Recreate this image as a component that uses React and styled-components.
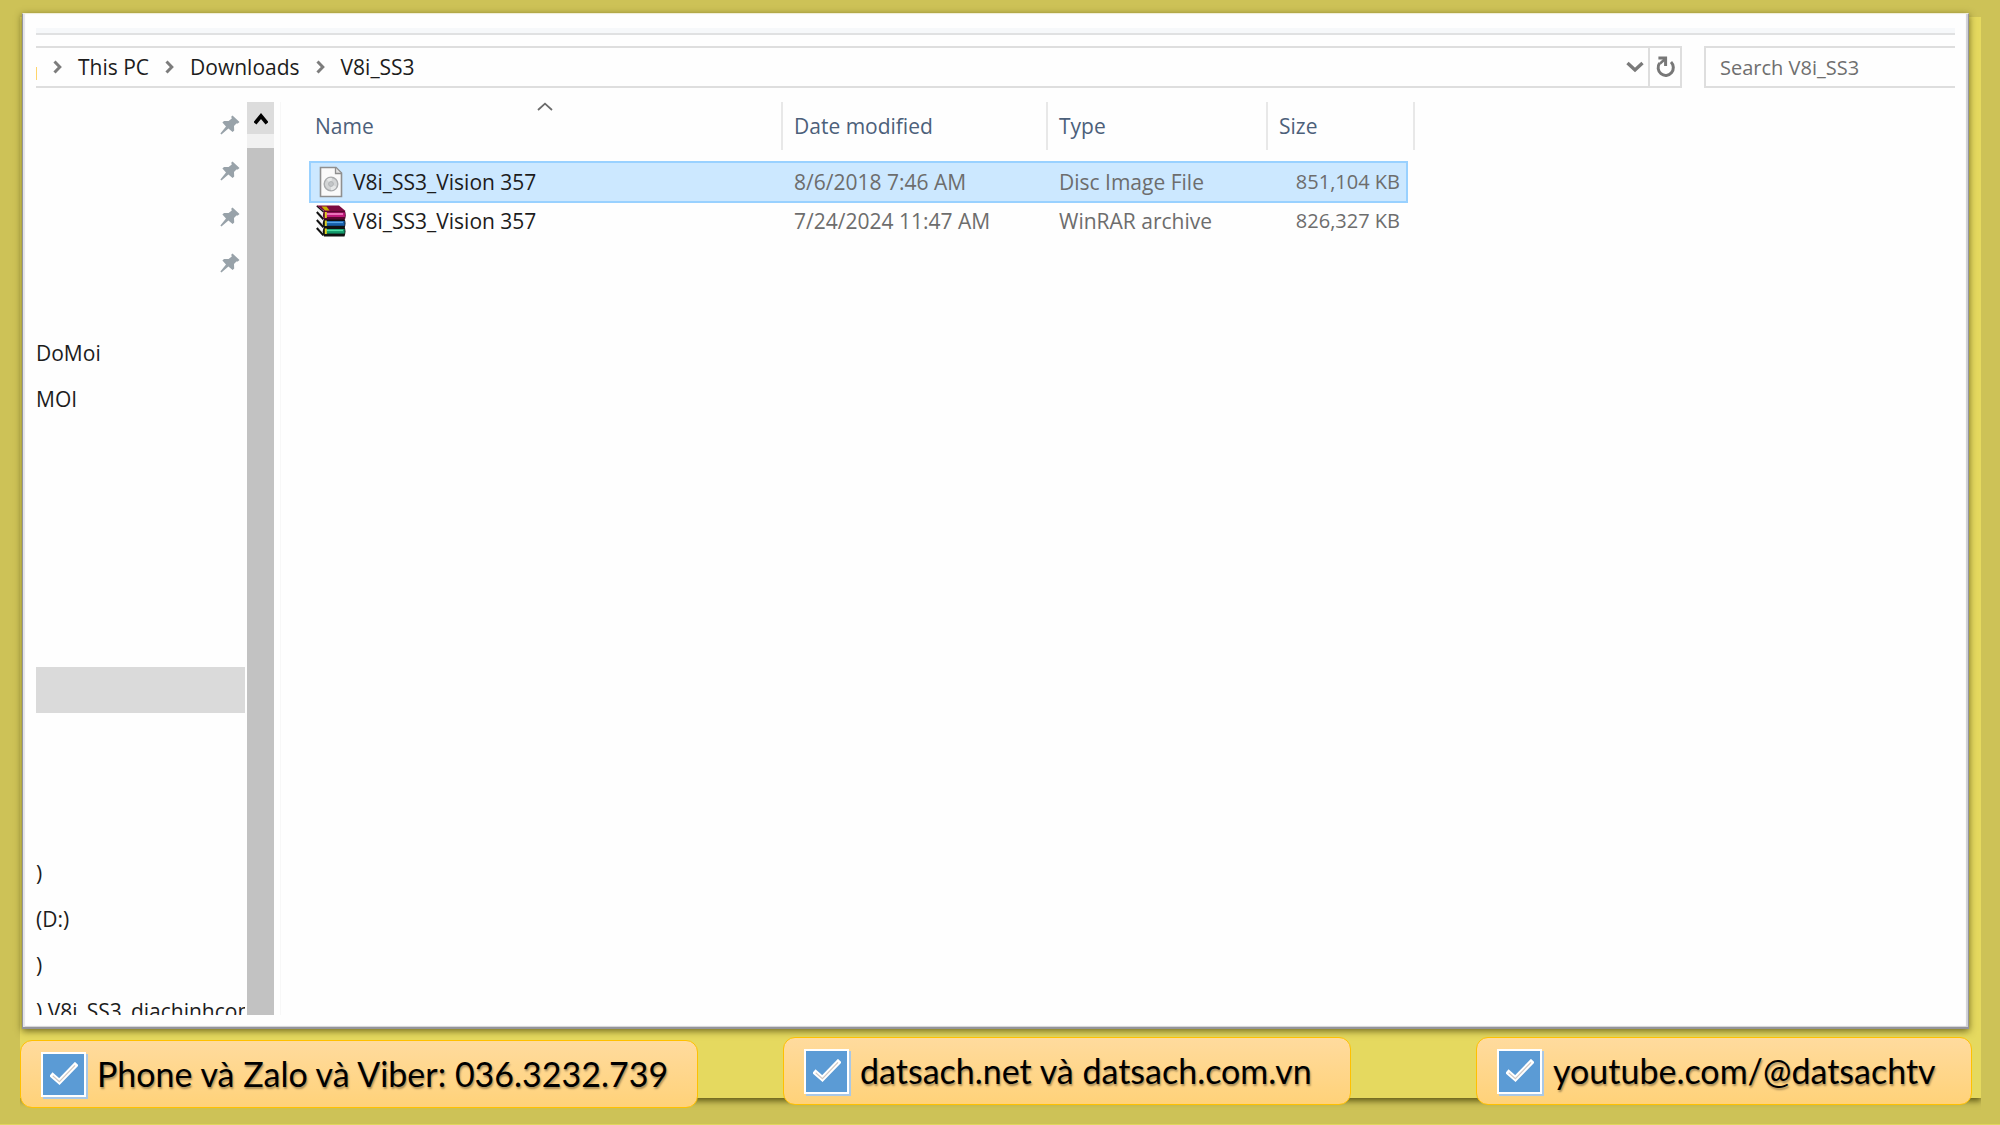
import { useState } from "react";
import styled, { createGlobalStyle } from "styled-components";

const folders = [
  { gap: 0, rows: [{ pinned: true }, { pinned: true }, { pinned: true }, { pinned: true }] },
  { gap: 44, rows: [{ name: "DoMoi" }, { name: "MOI" }] },
  { gap: 245, rows: [{ active: true }] },
  { gap: 137, rows: [{ name: ")" }, { name: "(D:)" }, { name: ")" }, { name: ") V8i_SS3_diachinhcong" }] },
];

const files = [
  { id: 1, kind: "disc", name: "V8i_SS3_Vision 357", date: "8/6/2018 7:46 AM", type: "Disc Image File", size: "851,104 KB" },
  { id: 2, kind: "rar", name: "V8i_SS3_Vision 357", date: "7/24/2024 11:47 AM", type: "WinRAR archive", size: "826,327 KB" },
];

const PinIcon = () => (
  <svg width="20" height="20" viewBox="0 0 20 20" fill="#98a2a9">
    <path d="M12.5 0.5 L19.5 7 L17.8 8.6 L16.4 8.4 L14 11 L14.2 15.4 L12.6 17 L8.4 13.4 L1.4 19.6 L0.4 18.6 L6 11.4 L2.4 7.6 L4 6 L8.6 6 L11.8 3.4 L11.2 1.8 Z" />
  </svg>
);

const ChevronRight = () => (
  <svg width="9" height="14" viewBox="0 0 9 14" fill="none" stroke="#7c7c7c" strokeWidth="3">
    <path d="M1.5 1.5 L6.8 7 L1.5 12.5" />
  </svg>
);

const ChevronDown = () => (
  <svg width="18" height="12" viewBox="0 0 18 12" fill="none" stroke="#7a7a7a" strokeWidth="3.4">
    <path d="M1.5 2 L9 9 L16.5 2" />
  </svg>
);

const RefreshIcon = () => (
  <svg width="20" height="22" viewBox="0 0 20 22" fill="none" stroke="#777" strokeWidth="3">
    <path d="M16 6 A7.6 7.8 0 1 1 4.6 7" />
    <path d="M3.4 2 H10.6 V10" strokeWidth="3" />
    <path d="M10 3 L5 7.6" strokeWidth="2.6" />
  </svg>
);

const ScrollUpIcon = () => (
  <svg width="14" height="13" viewBox="0 0 14 13" fill="none" stroke="#000" strokeWidth="3.8">
    <path d="M1 11.4 L7 4 L13 11.4" />
  </svg>
);

const SortIcon = () => (
  <svg width="16" height="9" viewBox="0 0 16 9" fill="none" stroke="#6b6b6b" strokeWidth="1.8">
    <path d="M1 8 L8 1.6 L15 8" />
  </svg>
);

const DiscFileIcon = () => (
  <svg width="30" height="32" viewBox="0 0 30 32">
    <path d="M4.5 1.5 H20 L25.5 7 V30.5 H4.5 Z" fill="#fafafa" stroke="#8f8f8f" strokeWidth="1.6" />
    <path d="M19.5 1.8 V7.5 H25.2" fill="#e3e3e3" stroke="#8f8f8f" strokeWidth="1.3" />
    <circle cx="15" cy="18" r="6.8" fill="#d3d5d6" stroke="#a9abad" strokeWidth="1.4" />
    <path d="M15 18 L10.6 13.6 A6.2 6.2 0 0 1 16 11.9 Z" fill="#e6e8e8" />
    <path d="M15 18 L20.4 20.8 A6.2 6.2 0 0 1 15 24.2 Z" fill="#e6e8e8" />
    <circle cx="15" cy="18" r="2.4" fill="#c3c6c8" stroke="#b1b4b6" />
  </svg>
);

const RarFileIcon = () => (
  <svg width="30" height="32" viewBox="0 0 30 32">
    {/* green book */}
    <path d="M2 19 L8 22 L8 30 L2 25 Z" fill="#f4f4f4" />
    <path d="M0.8 23 L7.4 30.4" stroke="#111" strokeWidth="2" />
    <path d="M8 22 H28.5 Q30.5 26 28.5 31.4 H8 Q5.5 26.5 8 22 Z" fill="#111" />
    <path d="M9 24 H28.6 V28.6 H9 Z" fill="#12986a" />
    <path d="M10.5 25.4 H27" stroke="#4fe0a8" strokeWidth="1.4" />
    {/* blue book */}
    <path d="M2 11 L8 14 L8 22 L2 17 Z" fill="#f4f4f4" />
    <path d="M0.8 15 L7.4 22.2" stroke="#111" strokeWidth="2" />
    <path d="M8 14 H28.5 Q30.5 18 28.5 23 H8 Q5.5 18.5 8 14 Z" fill="#111" />
    <path d="M9 16 H28.6 V20.8 H9 Z" fill="#175fa8" />
    <path d="M10.5 17.4 H27" stroke="#58a7e8" strokeWidth="1.4" />
    {/* magenta book on top */}
    <path d="M1 2 L8 7 L8 14 L2 9 Z" fill="#f4f4f4" />
    <path d="M0.8 7 L7.4 14.2" stroke="#111" strokeWidth="2" />
    <path d="M0.8 1 L7.6 7" stroke="#111" strokeWidth="1.4" />
    <path d="M0.5 0.5 H23 L29.5 6 H8 Z" fill="#7c0a41" />
    <path d="M8 6 H29 Q30.5 10 29 14.6 H8 Q5.8 10 8 6 Z" fill="#5a0730" />
    <path d="M9 7.5 H28.8 V12 H9 Z" fill="#c0197a" />
    <path d="M10.5 9 H27" stroke="#f48bca" strokeWidth="1.6" />
    <path d="M5.5 1.5 H10.5 L13.5 5.5 H9 Z" fill="#c9b400" />
    <path d="M9.8 7 V13 M9.8 15.6 V21 M9.8 23.6 V29" stroke="#e0d020" strokeWidth="2" />
  </svg>
);

const TickIcon = () => (
  <svg width="28" height="24" viewBox="0 0 28 24" fill="none" strokeLinecap="square">
    <path d="M2.8 13.8 L9.4 19.6 L25 3.4" stroke="#fff" strokeWidth="5" />
    <path d="M3.2 14.2 L9.4 19.6 L24.6 3.8" stroke="#cfc8c4" strokeWidth="1.2" />
  </svg>
);

const ContactCard = ({ children, ...props }) => (
  <Card {...props}>
    <TickBox>
      <input type="checkbox" defaultChecked />
      <TickIcon />
    </TickBox>
    <span>{children}</span>
  </Card>
);

export default function App() {
  const [selected, setSelected] = useState(1);
  const [query, setQuery] = useState("");

  return (
    <Page>
      <GlobalStyle />
      <Explorer>
        <Ribbon />
        <Toolbar>
          <AddressBar aria-label="Address">
            <FolderEdge />
            <ChevronRight />
            <Crumb href="#this-pc">This PC</Crumb>
            <ChevronRight />
            <Crumb href="#downloads">Downloads</Crumb>
            <ChevronRight />
            <Crumb href="#v8i">V8i_SS3</Crumb>
            <HistoryButton type="button" aria-label="Previous locations">
              <ChevronDown />
            </HistoryButton>
            <RefreshButton type="button" aria-label="Refresh">
              <RefreshIcon />
            </RefreshButton>
          </AddressBar>
          <Search
            type="text"
            aria-label="Search V8i_SS3"
            placeholder="Search V8i_SS3"
            value={query}
            onChange={(e) => setQuery(e.target.value)}
          />
        </Toolbar>
        <Content>
          <Sidebar aria-label="Folders">
            {folders.map((group, i) => (
              <FolderGroup key={i} $gap={group.gap}>
                {group.rows.map((row, j) => (
                  <FolderRow key={j} $active={row.active}>
                    <span>{row.name}</span>
                    {row.pinned && <PinIcon />}
                  </FolderRow>
                ))}
              </FolderGroup>
            ))}
          </Sidebar>
          <Scrollbar>
            <ScrollUp type="button" aria-label="Scroll up">
              <ScrollUpIcon />
            </ScrollUp>
            <ScrollThumb />
          </Scrollbar>
          <FilePane>
            <FileTable>
              <colgroup>
                <Col $width={474} />
                <Col $width={265} />
                <Col $width={220} />
                <Col $width={140} />
                <Col $width={7} />
              </colgroup>
              <thead>
                <tr>
                  <Th>
                    <HeadButton type="button">
                      Name
                      <SortMark>
                        <SortIcon />
                      </SortMark>
                    </HeadButton>
                  </Th>
                  <Th>
                    <HeadButton type="button" $inset>Date modified</HeadButton>
                  </Th>
                  <Th>
                    <HeadButton type="button" $inset>Type</HeadButton>
                  </Th>
                  <Th colSpan={2}>
                    <HeadButton type="button" $inset>Size</HeadButton>
                  </Th>
                </tr>
              </thead>
              <tbody>
                {files.map((file) => (
                  <FileRow
                    key={file.id}
                    $selected={file.id === selected}
                    onClick={() => setSelected(file.id)}
                  >
                    <td>
                      <FileName>
                        {file.kind === "disc" ? <DiscFileIcon /> : <RarFileIcon />}
                        {file.name}
                      </FileName>
                    </td>
                    <td>{file.date}</td>
                    <td>{file.type}</td>
                    <SizeCell>{file.size}</SizeCell>
                  </FileRow>
                ))}
              </tbody>
            </FileTable>
          </FilePane>
        </Content>
      </Explorer>
      <Footer>
        <ContactCard $width={678} $drop={3}>Phone và Zalo và Viber: 036.3232.739</ContactCard>
        <ContactCard $width={568} $before="85px">datsach.net và datsach.com.vn</ContactCard>
        <ContactCard $width={496} $before="auto">youtube.com/@datsachtv</ContactCard>
      </Footer>
    </Page>
  );
}

const GlobalStyle = createGlobalStyle`
  *, *::before, *::after {
    box-sizing: border-box;
  }
  body {
    margin: 0;
    background: #cdc257;
    font-family: "Open Sans", "Noto Sans", sans-serif;
    font-size: 21px;
    line-height: 28px;
    color: #1c1c1c;
  }
  button, input {
    font: inherit;
    color: inherit;
  }
  button {
    padding: 0;
    border: 0;
    background: none;
  }
  svg {
    flex: none;
    display: block;
  }
`;

const Page = styled.div`
  position: relative;
  isolation: isolate;
  display: flex;
  flex-direction: column;
  height: 100vh;
  padding: 13px 28px 16px 20px;
  border-bottom: 1px solid #e0d55e;

  /* bright sheet lying under the window and the cards */
  &::before {
    content: "";
    position: absolute;
    z-index: -1;
    inset: 17px 19px 26px 20px;
    background: #e5d95f;
    box-shadow: 0 3px 6px rgba(60, 55, 0, 0.75);
    clip-path: inset(0 0 -14px 0);
  }
`;

const Explorer = styled.main`
  flex: 1;
  min-height: 0;
  display: flex;
  flex-direction: column;
  margin: 0 3px 0 2px;
  padding: 14px 13px 12px;
  background: #fefefe;
  border: 1px solid #94949a;
  border-top-color: #f0eed8;
  border-bottom-width: 2px;
  box-shadow:
    inset 2px 0 1px #e4e4e8,
    inset -2px -1px 1px #d0d0d4,
    0 2px 7px rgba(70, 64, 10, 0.75);
`;

const Ribbon = styled.div`
  flex: none;
  height: 7px;
  background: #f6f8fa;
  border-bottom: 2px solid #e0e1e2;
`;

const Toolbar = styled.div`
  display: flex;
  gap: 22px;
  margin-top: 11px;
`;

const AddressBar = styled.nav`
  flex: 1;
  display: flex;
  align-items: center;
  gap: 16px;
  height: 42px;
  border: 2px solid #dedede;
  border-left: 0;
`;

const FolderEdge = styled.span`
  align-self: flex-end;
  width: 1px;
  height: 13px;
  margin-bottom: 6px;
  background: #ffd56b;
`;

const Crumb = styled.a`
  color: inherit;
  text-decoration: none;
`;

const HistoryButton = styled.button`
  margin-left: auto;
  margin-right: -12px;
`;

const RefreshButton = styled.button`
  display: grid;
  place-items: center;
  align-self: stretch;
  width: 32px;
  border-left: 2px solid #dedede;
`;

const Search = styled.input`
  flex: 0 1 251px;
  min-width: 0;
  height: 42px;
  padding: 0 0 0 14px;
  border: 2px solid #dedede;
  border-right: 0;
  background: transparent;
  font-size: 20px;

  &::placeholder {
    color: #6f6f6f;
    opacity: 1;
  }
`;

const Content = styled.div`
  flex: 1;
  min-height: 0;
  display: flex;
  padding-top: 14px;
`;

const Sidebar = styled.aside`
  flex: none;
  width: 209px;
  overflow: hidden;
`;

const FolderGroup = styled.div`
  margin-top: ${(props) => props.$gap}px;
`;

const FolderRow = styled.div`
  display: flex;
  align-items: center;
  justify-content: space-between;
  height: 46px;
  padding-right: 5px;
  white-space: nowrap;
  background: ${(props) => (props.$active ? "#dadada" : "transparent")};
`;

const Scrollbar = styled.div`
  flex: none;
  display: flex;
  flex-direction: column;
  gap: 14px;
  width: 27px;
  margin-left: 2px;
  background: #f1f1f1;
`;

const ScrollUp = styled.button`
  display: grid;
  place-items: center;
  height: 32px;
  background: #dcdcdc;
`;

const ScrollThumb = styled.div`
  flex: 1;
  background: #c2c2c2;
`;

const FilePane = styled.section`
  flex: 1;
  min-width: 0;
  margin-left: 6px;
  padding-left: 28px;
  border-left: 1px solid #f7f7f7;
`;

const FileTable = styled.table`
  table-layout: fixed;
  width: 1106px;
  border-collapse: separate;
  border-spacing: 0;
`;

const Col = styled.col`
  width: ${(props) => props.$width}px;
`;

const Th = styled.th`
  padding: 0 0 11px;
  font-weight: 400;
`;

const HeadButton = styled.button`
  position: relative;
  display: flex;
  align-items: center;
  width: 100%;
  height: 48px;
  padding-left: ${(props) => (props.$inset ? 11 : 6)}px;
  border-right: 2px solid #e8e8e8;
  color: #4c607a;
`;

const SortMark = styled.span`
  position: absolute;
  top: 0;
  left: 50%;
  transform: translateX(-50%);
`;

const FileRow = styled.tr`
  td {
    height: ${(props) => (props.$selected ? 42 : 36)}px;
    padding: 0 0 0 11px;
    color: #6d6d6d;
    white-space: nowrap;
    background: ${(props) => (props.$selected ? "#cce8ff" : "transparent")};
    border: 0 solid #99d1ff;
    border-width: ${(props) => (props.$selected ? "2px 0" : "0")};
  }

  td:first-child {
    padding-left: ${(props) => (props.$selected ? 5 : 7)}px;
    border-left-width: ${(props) => (props.$selected ? 2 : 0)}px;
    color: #1c1c1c;
  }

  td:last-child {
    padding-right: ${(props) => (props.$selected ? 6 : 8)}px;
    border-right-width: ${(props) => (props.$selected ? 2 : 0)}px;
  }
`;

const SizeCell = styled.td`
  font-size: 20px;
  text-align: right;
`;

const FileName = styled.span`
  display: flex;
  align-items: center;
  gap: 7px;
`;

const Footer = styled.footer`
  flex: none;
  display: flex;
  align-items: flex-start;
  padding-top: 8px;
`;

const Card = styled.label`
  flex: 0 1 ${(props) => props.$width}px;
  display: flex;
  align-items: center;
  gap: 11px;
  height: 68px;
  margin-top: ${(props) => props.$drop || 0}px;
  margin-left: ${(props) => props.$before || 0};
  padding-left: 20px;
  border: 1px solid #ffc000;
  border-radius: 12px;
  background: linear-gradient(#ffdb9e, #ffd279);
  color: #000;
  font-family: Lato, "Open Sans", sans-serif;
  font-size: 34px;
  line-height: 40px;
  white-space: nowrap;
  text-shadow: 1px 2px 2px rgba(0, 0, 0, 0.35);
`;

const TickBox = styled.span`
  flex: none;
  display: grid;
  place-items: center;

  input, svg {
    grid-area: 1 / 1;
  }

  input {
    appearance: none;
    width: 45px;
    height: 45px;
    margin: 0;
    border: 2px solid #fff;
    background: #5b9bd5;
    box-shadow: 2px 2px 0 #a9c8e6;
  }

  svg {
    pointer-events: none;
    visibility: hidden;
  }

  input:checked + svg {
    visibility: visible;
  }
`;
